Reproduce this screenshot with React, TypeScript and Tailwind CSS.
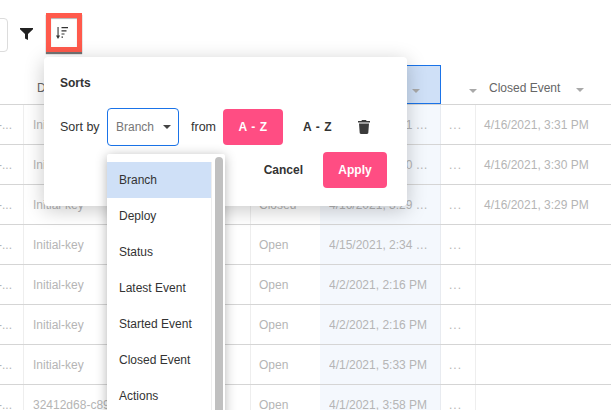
const ROWS = [
  { deploy: "Initial-key", status: "", latest: "4/16/2021, 3:31 PM", closed: "4/16/2021, 3:31 PM" },
  { deploy: "Initial-key", status: "", latest: "4/16/2021, 3:30 PM", closed: "4/16/2021, 3:30 PM" },
  { deploy: "Initial-key", status: "Closed", latest: "4/16/2021, 3:29 PM", closed: "4/16/2021, 3:29 PM" },
  { deploy: "Initial-key", status: "Open", latest: "4/15/2021, 2:34 PM", closed: "" },
  { deploy: "Initial-key", status: "Open", latest: "4/2/2021, 2:16 PM", closed: "" },
  { deploy: "Initial-key", status: "Open", latest: "4/2/2021, 2:16 PM", closed: "" },
  { deploy: "Initial-key", status: "Open", latest: "4/1/2021, 5:33 PM", closed: "" },
  { deploy: "32412d68-c89d-4a1c-9be2-77f0a1", status: "Open", latest: "4/1/2021, 3:58 PM", closed: "" },
];

const OPTIONS = ["Branch", "Deploy", "Status", "Latest Event", "Started Event", "Closed Event", "Actions"];

function Caret({ className }: { className: string }) {
  return <span className={`inline-block h-0 w-0 border-x-[4px] border-t-[4px] border-x-transparent ${className}`} />;
}

function FilterIcon() {
  return (
    <svg width="13" height="12" viewBox="0 0 13 12" className="fill-[#222]">
      <path d="M0 0h13v1.2L8 6v6L5 10.4V6L0 1.2z" />
    </svg>
  );
}

function SortIcon() {
  return (
    <svg width="12" height="12" viewBox="0 0 12 12" className="fill-[#333]">
      <path d="M1.5 0h1.1v8.6h1.5L2 12 0 8.6h1.5z" />
      <path d="M5.5 0h6.5v1.2H5.5zM5.5 3.2h5v1.2h-5zM5.5 6.4h3v1.2h-3zM5.5 9.6h1.5v1.2H5.5z" />
    </svg>
  );
}

function TrashIcon() {
  return (
    <svg width="12" height="14" viewBox="0 0 12 14" className="fill-[#3a3a3a]">
      <path d="M4 0h4l.6 1H12v1.6H0V1h3.4zM1 3.6h10l-.7 9.2c0 .7-.6 1.2-1.2 1.2H2.9c-.6 0-1.2-.5-1.2-1.2z" />
    </svg>
  );
}

export default function App() {
  return (
    <div className="relative h-[410px] w-[611px] overflow-hidden bg-white font-['Liberation_Sans',Arial,sans-serif] text-[12px]">
      {/* Toolbar */}
      <div className="flex h-[65px]">
        <div className="mt-[18px] ml-[-20px] h-[34px] w-[28px] rounded-[4px] border border-[#dcdcdc]" />
        <div className="mt-[28px] ml-[12px] h-[12px]">
          <FilterIcon />
        </div>
        <div className="mt-[13px] ml-[13px] flex h-[39px] w-[36px] items-center border-[5px] border-[#ff5a4c] pl-[5px] shadow-[0_2px_1px_rgba(0,0,0,0.55),inset_0_1px_1px_rgba(0,0,0,0.3)]">
          <SortIcon />
        </div>
      </div>

      {/* Table head */}
      <div className="flex h-[40px] border-b border-[#d5d5d5] text-[#666]">
        <div className="w-[24px]" />
        <div className="w-[226px] pt-[14px] pl-[13px]">Deploy</div>
        <div className="w-[70px]" />
        <div className="flex h-[39px] w-[121px] items-end justify-end border border-[#1a73e8] bg-[#cfe0f7] pr-[20px] pb-[10px]">
          <Caret className="border-t-[#a9a9a9]" />
        </div>
        <div className="flex w-[36px] items-end justify-end pb-[11px]">
          <Caret className="border-t-[#a9a9a9]" />
        </div>
        <div className="flex flex-1 items-start pt-[14px] pl-[12px]">
          <span>Closed Event</span>
          <Caret className="mt-[9px] ml-[16px] border-t-[#a9a9a9]" />
        </div>
      </div>

      {/* Table rows */}
      {ROWS.map((row, i) => (
        <div key={i} className="flex h-[40px] border-b border-[#d5d5d5] text-[#b5b5b5]">
          <div className="flex w-[24px] items-center justify-end border-r border-[#eeeeee] pr-[11px]">
            <span className="whitespace-nowrap">-...</span>
          </div>
          <div className="flex w-[226px] items-center pr-[14px] pl-[9px]">
            <span className="truncate">{row.deploy}</span>
          </div>
          <div className="flex w-[70px] items-center border-l border-[#eeeeee] pl-[8px]">{row.status}</div>
          <div className="flex w-[121px] items-center border-r border-[#e8ebf0] bg-[#f4f8fd] px-[9px]">
            <span className="truncate">{row.latest}</span>
          </div>
          <div className="flex w-[35px] items-center border-r border-[#eeeeee] pl-[8px] tracking-[1px]">...</div>
          <div className="flex flex-1 items-center pl-[8px]">{row.closed}</div>
        </div>
      ))}

      {/* Sorts popover */}
      <div className="absolute top-[57px] left-[44px] h-[149px] w-[363px] rounded-[4px] bg-white px-[16px] pt-[18px] shadow-[0_4px_20px_rgba(0,0,0,0.22)]">
        <div className="text-[12px] leading-[16px] font-bold text-[#333]">Sorts</div>
        <div className="mt-[17px] flex items-center text-[#333]">
          <span className="w-[47px] text-[12.5px]">Sort by</span>
          <div className="flex h-[38px] w-[72px] items-center rounded-[4px] border border-[#1a73e8] pl-[8px] text-[#777]">
            <span>Branch</span>
            <Caret className="ml-[9px] border-t-[#444]" />
          </div>
          <span className="ml-[12px] w-[32px] text-[12.5px]">from</span>
          <button className="h-[36px] w-[60px] rounded-[4px] bg-[#ff4d83] text-[12px] font-bold tracking-[0.6px] text-white">A - Z</button>
          <button className="ml-[20px] w-[28px] text-[12px] font-bold tracking-[0.6px] whitespace-nowrap text-[#333]">A - Z</button>
          <div className="ml-[27px]">
            <TrashIcon />
          </div>
        </div>
        <div className="mt-[6px] flex items-center justify-end pr-[4px]">
          <span className="mr-[20px] text-[12px] font-bold text-[#333]">Cancel</span>
          <button className="h-[36px] w-[64px] rounded-[4px] bg-[#ff4d83] text-[12px] font-bold text-white">Apply</button>
        </div>

        {/* Sort by options */}
        <div className="absolute top-[97px] left-[63px] flex h-[270px] w-[118px] rounded-[2px] bg-white pt-[8px] text-[12px] text-[#333] shadow-[0_2px_12px_rgba(0,0,0,0.3)]">
          <ul className="w-[105px] border-r border-[#eeeeee]">
            {OPTIONS.map((option) => (
              <li
                key={option}
                className={`flex h-[36px] items-center pl-[12px] ${option === "Branch" ? "bg-[#cfe0f7]" : ""}`}
              >
                {option}
              </li>
            ))}
          </ul>
          <div className="mt-[-5px] ml-[3px] w-[8px] rounded-t-[4px] bg-[#c0c0c0]" />
        </div>
      </div>
    </div>
  );
}
